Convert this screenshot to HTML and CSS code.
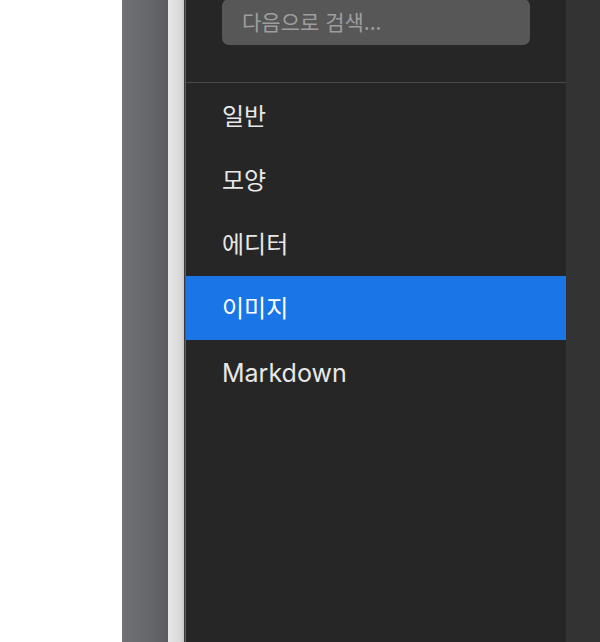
FILE: index.html
```html
<!DOCTYPE html>
<html lang="ko">
<head>
<meta charset="utf-8">
<link rel="stylesheet" href="styles.css">
</head>
<body>
<div class="screen">
  <div class="blank"></div>
  <div class="dock"></div>
  <div class="frame"></div>
  <div class="panel">
    <div class="search-area">
      <div class="search">다음으로 검색...</div>
    </div>
    <ul class="menu">
      <li class="item">일반</li>
      <li class="item">모양</li>
      <li class="item">에디터</li>
      <li class="item selected">이미지</li>
      <li class="item latin" lang="en">Markdown</li>
    </ul>
  </div>
  <div class="side"></div>
</div>
</body>
</html>
```
FILE: styles.css
```css
html, body {
  margin: 0;
  padding: 0;
  height: 100%;
  overflow: hidden;
}
body {
  font-family: "Inter", "Noto Sans CJK KR", sans-serif;
  background: #ffffff;
}
.screen {
  display: flex;
  height: 642px;
  width: 600px;
}
.blank {
  width: 122px;
  flex: none;
  background: #ffffff;
}
.dock {
  width: 46px;
  flex: none;
  background: linear-gradient(to right, #707176, #66676b 60%, #5b5c60);
}
.frame {
  width: 17px;
  flex: none;
  background: linear-gradient(to right, #e6e6e6, #dadada 70%, #c8c8c8 94%, #3c3c3c 94%);
}
.panel {
  width: 380px;
  flex: none;
  background: #262626;
  border-left: 1px solid #5a5a5a;
  display: flex;
  flex-direction: column;
}
.search-area {
  height: 83px;
  border-bottom: 1px solid #4a4a4a;
  padding: 0 36px;
  box-sizing: border-box;
}
.search {
  margin-top: -1px;
  height: 46px;
  width: 308px;
  box-sizing: border-box;
  background: #575757;
  border-radius: 7px;
  padding-left: 20px;
  padding-bottom: 2px;
  display: flex;
  align-items: center;
  color: #9e9e9e;
  font-family: "Noto Sans CJK KR", sans-serif;
  font-size: 21px;
}
.menu {
  list-style: none;
  margin: 0;
  padding: 1px 0 0;
}
.item {
  height: 64px;
  box-sizing: border-box;
  display: flex;
  align-items: center;
  padding-left: 36px;
  padding-bottom: 3px;
  color: #e8e8e8;
  font-size: 24px;
}
.item.latin {
  font-size: 25px;
  padding-top: 2px;
  padding-bottom: 0;
}
.item.selected {
  background: #1a75e6;
  color: #ffffff;
}
.side {
  flex: 1;
  background: #333333;
}
```
